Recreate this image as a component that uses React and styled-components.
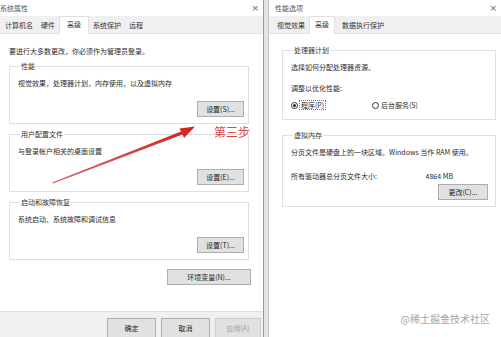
import styled, { createGlobalStyle } from 'styled-components'

const GlobalStyle = createGlobalStyle`
  html, body {
    margin: 0;
    padding: 0;
    background: #ffffff;
  }
  body {
    font-family: "Noto Sans CJK SC", "Liberation Sans", sans-serif;
    font-size: 7px;
    color: #2a2a2a;
  }
`

const Screen = styled.div`
  position: relative;
  display: flex;
  width: 501px;
  height: 337px;
  overflow: hidden;
  background: #ffffff;
`

const Window = styled.div`
  display: flex;
  flex-direction: column;
  width: ${p => p.$width}px;
  flex: ${p => (p.$width ? '0 0 auto' : '1 1 auto')};
  background: #ffffff;
`

const TitleBar = styled.div`
  display: flex;
  align-items: center;
  justify-content: space-between;
  height: 16px;
  padding: 0 4px 0 ${p => p.$indent}px;
  line-height: 8px;
  color: #555;
`

const Close = styled.span`
  font-family: "DejaVu Sans", sans-serif;
  font-size: 9px;
  color: #666;
`

const TabStrip = styled.div`
  display: flex;
  align-items: flex-end;
  height: 18px;
  padding-left: ${p => p.$indent}px;
  background: #f0f0f0;
  border-bottom: 1px solid #e2e2e2;
  box-sizing: border-box;
`

const Tab = styled.div`
  height: ${p => (p.$active ? 17 : 15)}px;
  line-height: 15px;
  padding: 0 ${p => p.$pad ?? 3}px;
  margin-bottom: ${p => (p.$active ? -1 : 0)}px;
  background: ${p => (p.$active ? '#ffffff' : 'transparent')};
  border: 1px solid ${p => (p.$active ? '#e0e0e0' : 'transparent')};
  border-bottom: none;
  color: #333;
  white-space: nowrap;
`

const Body = styled.div`
  flex: 1 1 auto;
  display: flex;
  flex-direction: column;
  padding: ${p => p.$pad};
`

const Note = styled.div`
  line-height: 8px;
  margin-bottom: 7px;
  white-space: nowrap;
`

const Group = styled.fieldset`
  margin: 0 0 ${p => p.$gap ?? 6}px 0;
  padding: 5px 4px ${p => p.$bottom ?? 6}px 8px;
  width: ${p => p.$width}px;
  box-sizing: border-box;
  border: 1px solid #e0e0e0;
  min-width: 0;
`

const Legend = styled.legend`
  padding: 0 1px;
  margin-left: 2px;
  line-height: 8px;
  color: #333;
`

const Line = styled.div`
  line-height: 8px;
  white-space: nowrap;
  margin-top: ${p => p.$top ?? 0}px;
  display: flex;
  align-items: center;
`

const ButtonRow = styled.div`
  display: flex;
  justify-content: flex-end;
  margin-top: ${p => p.$top ?? 0}px;
  padding-right: ${p => p.$right ?? 0}px;
  width: ${p => (p.$width ? `${p.$width}px` : 'auto')};
`

const Button = styled.div`
  width: ${p => p.$w ?? 47}px;
  height: 16px;
  box-sizing: border-box;
  display: flex;
  align-items: center;
  justify-content: center;
  background: #e1e1e1;
  border: 1px solid ${p => (p.$disabled ? '#cccccc' : '#adadad')};
  color: ${p => (p.$disabled ? '#a0a0a0' : '#222')};
  white-space: nowrap;
  line-height: 8px;
`

const Footer = styled.div`
  display: flex;
  justify-content: flex-end;
  gap: 5px;
  height: 26px;
  padding: 6px 2px 0 0;
  box-sizing: border-box;
  background: #f0f0f0;
  border-top: 1px solid #dedede;
`

const FooterButton = styled(Button)`
  width: ${p => (p.$disabled ? 46 : 49)}px;
  height: 20px;
`

const Divider = styled.div`
  flex: 0 0 4px;
  background: #e4e4e4;
  border-left: 1px solid #9a9a9a;
  border-right: 1px solid #c4c4c4;
`

const Radio = styled.span`
  display: inline-flex;
  align-items: center;
  justify-content: center;
  width: 7px;
  height: 7px;
  box-sizing: border-box;
  border: 1px solid #333;
  border-radius: 50%;
  margin-right: 2px;
  &::after {
    content: '';
    display: ${p => (p.$checked ? 'block' : 'none')};
    width: 3px;
    height: 3px;
    border-radius: 50%;
    background: #222;
  }
`

const RadioOption = styled.span`
  display: inline-flex;
  align-items: center;
  width: ${p => p.$w}px;
`

const Focus = styled.span`
  outline: 1px dotted #777;
  padding: 0 1px;
`

const SizeRow = styled(Line)`
  justify-content: space-between;
  width: 162px;
`

const Step = styled.div`
  position: absolute;
  left: 214px;
  top: 124px;
  font-size: 12px;
  line-height: 16px;
  color: #d44848;
  font-family: "Noto Sans CJK SC", serif;
`

const Arrow = styled.svg`
  position: absolute;
  left: 0;
  top: 0;
  pointer-events: none;
`

const Watermark = styled.div`
  position: absolute;
  right: 11px;
  bottom: 12px;
  font-size: 10px;
  line-height: 12px;
  color: #a6a6a6;
`

const groupsLeft = [
  { title: '性能', text: '视觉效果，处理器计划，内存使用，以及虚拟内存', btn: '设置(S)...' },
  { title: '用户配置文件', text: '与登录帐户相关的桌面设置', btn: '设置(E)...' },
  { title: '启动和故障恢复', text: '系统启动、系统故障和调试信息', btn: '设置(T)...' },
]

const App = () => {
  return (
    <>
      <GlobalStyle />
      <Screen>
        <Window $width={263}>
          <TitleBar $indent={0}>
            <span>系统属性</span>
            <Close>×</Close>
          </TitleBar>
          <TabStrip $indent={1}>
            <Tab>计算机名</Tab>
            <Tab>硬件</Tab>
            <Tab $active $pad={7}>高级</Tab>
            <Tab>系统保护</Tab>
            <Tab>远程</Tab>
          </TabStrip>
          <Body $pad="13px 0 0 9px">
            <Note>要进行大多数更改，你必须作为管理员登录。</Note>
            {groupsLeft.map(g => (
              <Group key={g.title} $width={240}>
                <Legend>{g.title}</Legend>
                <Line $top={4}>{g.text}</Line>
                <ButtonRow $top={14}>
                  <Button>{g.btn}</Button>
                </ButtonRow>
              </Group>
            ))}
            <ButtonRow $top={3} $width={242}>
              <Button $w={84}>环境变量(N)...</Button>
            </ButtonRow>
          </Body>
          <Footer>
            <FooterButton>确定</FooterButton>
            <FooterButton>取消</FooterButton>
            <FooterButton $disabled>应用(A)</FooterButton>
          </Footer>
        </Window>
        <Divider />
        <Window>
          <TitleBar $indent={6}>
            <span>性能选项</span>
            <Close>×</Close>
          </TitleBar>
          <TabStrip $indent={4}>
            <Tab>视觉效果</Tab>
            <Tab $active $pad={5}>高级</Tab>
            <Tab $pad={6}>数据执行保护</Tab>
          </TabStrip>
          <Body $pad="12px 0 0 13px">
            <Group $width={214} $gap={11} $bottom={10}>
              <Legend>处理器计划</Legend>
              <Line $top={4}>选择如何分配处理器资源。</Line>
              <Line $top={13}>调整以优化性能:</Line>
              <Line $top={9}>
                <RadioOption $w={81}>
                  <Radio $checked />
                  <Focus>程序(P)</Focus>
                </RadioOption>
                <RadioOption>
                  <Radio />
                  后台服务(S)
                </RadioOption>
              </Line>
            </Group>
            <Group $width={214} $bottom={6}>
              <Legend>虚拟内存</Legend>
              <Line $top={4}>分页文件是硬盘上的一块区域。Windows 当作 RAM 使用。</Line>
              <SizeRow $top={16}>
                <span>所有驱动器总分页文件大小:</span>
                <span>4864 MB</span>
              </SizeRow>
              <ButtonRow $top={4} $right={3}>
                <Button $w={50}>更改(C)...</Button>
              </ButtonRow>
            </Group>
          </Body>
        </Window>

        <Arrow width="501" height="337" viewBox="0 0 501 337">
          <defs>
            <linearGradient id="arrowFill" x1="0" y1="1" x2="1" y2="0">
              <stop offset="0" stopColor="#c62a2a" stopOpacity="0.7" />
              <stop offset="1" stopColor="#d42020" />
            </linearGradient>
          </defs>
          <path
            d="M52 182.5 L181 131.5 L179.5 128.5 L195 126.5 L184 138 L182.5 134.5 L53 183.5 Z"
            fill="url(#arrowFill)"
          />
        </Arrow>
        <Step>第三步</Step>
        <Watermark>@稀土掘金技术社区</Watermark>
      </Screen>
    </>
  )
}

export default App
